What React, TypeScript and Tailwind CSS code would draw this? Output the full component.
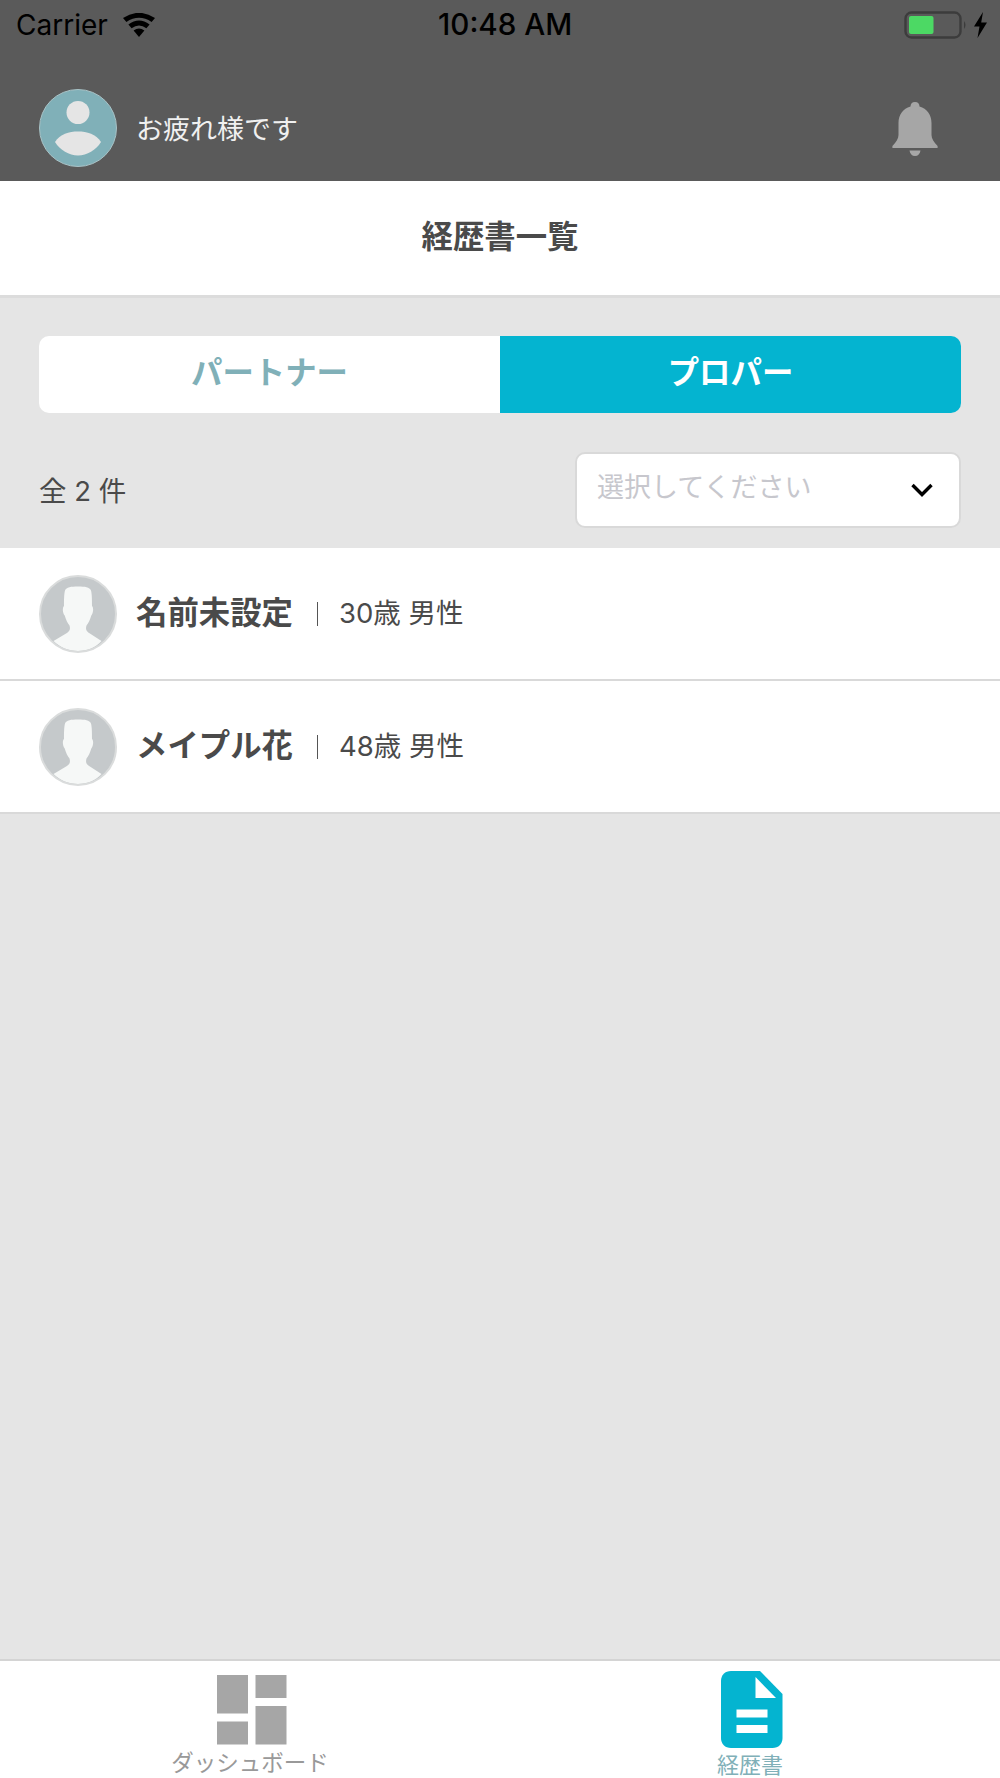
const jp = "font-['Noto_Sans_CJK_JP','Noto_Sans',sans-serif]";
const mixed = "font-['Inter','Noto_Sans_CJK_JP',sans-serif]";

function Wifi() {
  return (
    <svg width="34" height="24" viewBox="0 0 34 24" className="block">
      <path d="M17 24 L11.6 17.6 Q17 13.4 22.4 17.6 Z" fill="#000" />
      <path d="M9.6 15.2 L6.4 11.4 Q17 3.6 27.6 11.4 L24.4 15.2 Q17 9.8 9.6 15.2 Z" fill="#000" />
      <path d="M4.4 9 L1 5 Q17 -5.4 33 5 L29.6 9 Q17 0.6 4.4 9 Z" fill="#000" />
    </svg>
  );
}

function Battery() {
  return (
    <svg width="86" height="28" viewBox="0 0 86 28" className="block">
      <rect x="1.5" y="1.5" width="55" height="25" rx="6" fill="none" stroke="#3c3c3c" strokeWidth="2.4" />
      <rect x="5" y="5" width="24.5" height="18" rx="2" fill="#4cd964" />
      <path d="M60 10 Q63 14 60 18 Z" fill="#3c3c3c" />
      <path d="M79 1 L70 15.5 L75.5 15.5 L73.5 27 L83 11.5 L77.2 11.5 Z" fill="#000" />
    </svg>
  );
}

function Bell() {
  return (
    <svg width="46" height="54" viewBox="0 0 46 54" className="mt-[2px] block">
      <path
        d="M23 0 C26 0 27.5 2 27.5 4.6 C35 6.5 39.5 13 39.5 21 L39.5 33 C39.5 37 42 40 45.6 44 L45.6 46 L0.4 46 L0.4 44 C4 40 6.5 37 6.5 33 L6.5 21 C6.5 13 11 6.5 18.5 4.6 C18.5 2 20 0 23 0 Z"
        fill="#a6a6a6"
      />
      <path d="M17.5 48.5 L28.5 48.5 C28 52 26 54 23 54 C20 54 18 52 17.5 48.5 Z" fill="#a6a6a6" />
    </svg>
  );
}

function UserAvatar() {
  return (
    <svg width="78" height="78" viewBox="0 0 78 78" className="block">
      <circle cx="39" cy="39" r="38.5" fill="#80b0b8" stroke="#a9c3c7" strokeWidth="1" />
      <circle cx="39" cy="23.5" r="11.5" fill="#e5e5e5" />
      <path d="M16 53 C21 45 30 42.5 39 42.5 C48 42.5 57 45 62 53 C57 61 48 66.5 39 66.5 C30 66.5 21 61 16 53 Z" fill="#e5e5e5" />
    </svg>
  );
}

function PersonAvatar() {
  return (
    <svg width="78" height="78" viewBox="0 0 78 78" className="block">
      <circle cx="39" cy="39" r="38" fill="#c5c9cb" />
      <path
        d="M39 11.5 C46 11.5 50.5 12 52 15.5 C53 19 53 26 53 31 C54.8 32.5 54.4 38 52.3 40.5 C51 45 49.5 48 47.5 50.5 C46.5 54 47 56 50.5 58.2 L62.5 66 C57 72.5 48 76 39 76 C30 76 21 72.5 14.5 66 L27.5 58.2 C31 56 31.5 54 30.5 50.5 C28.5 48 27 45 25.7 40.5 C23.6 38 23.2 32.5 25 31 C25 26 25 19 26 15.5 C27.5 12 32 11.5 39 11.5 Z"
        fill="#f6f8f7"
      />
      <circle cx="39" cy="39" r="38" fill="none" stroke="#dadcdc" strokeWidth="2" />
    </svg>
  );
}

function Chevron() {
  return (
    <svg width="24" height="16" viewBox="0 0 24 16" className="block">
      <path d="M2.5 3 L12 12.5 L21.5 3" fill="none" stroke="#000" strokeWidth="3.4" />
    </svg>
  );
}

function DashIcon() {
  return (
    <svg width="70" height="70" viewBox="0 0 70 70" className="ml-[3px] block">
      <rect x="0" y="0" width="31" height="38.5" fill="#a6a6a6" />
      <rect x="38.5" y="0" width="31" height="23" fill="#a6a6a6" />
      <rect x="0" y="46.5" width="31" height="23" fill="#a6a6a6" />
      <rect x="38.5" y="31" width="31" height="38.5" fill="#a6a6a6" />
    </svg>
  );
}

function DocIcon() {
  return (
    <svg width="62" height="77" viewBox="0 0 62 77" className="ml-[3px] block">
      <path
        d="M10 0 L39 0 L61.5 23 L61.5 67 C61.5 73 57.5 77 51.5 77 L10 77 C4 77 0 73 0 67 L0 10 C0 4 4 0 10 0 Z"
        fill="#04b4d0"
      />
      <path d="M34.5 6 L55 27 L34.5 27 Z" fill="#fff" />
      <rect x="15.5" y="38.5" width="31" height="8" fill="#fff" />
      <rect x="15.5" y="54" width="31" height="8" fill="#fff" />
    </svg>
  );
}

function Row({ name, age }: { name: string; age: string }) {
  return (
    <div className="flex h-[133px] items-center border-b-2 border-[#d9d9d9] bg-white pl-[39px]">
      <PersonAvatar />
      <span className="ml-[19px] w-[159px] pb-[6px] text-[31.4px] leading-none font-bold whitespace-nowrap text-[#4a4a4a]">{name}</span>
      <span className="ml-[22px] h-[24px] w-px bg-[#555]" />
      <span className={`${mixed} ml-[21px] text-[27.5px] leading-none whitespace-nowrap text-[#4a4a4a]`}>{age}</span>
    </div>
  );
}

export default function App() {
  return (
    <div className={`${jp} flex h-[1778px] w-[1000px] flex-col overflow-hidden bg-[#e5e5e5]`}>
      <header className="relative h-[181px] shrink-0 bg-[#5a5a5a]">
        <div className="relative flex h-[50px] items-center justify-between pr-[10px] pl-[16px] text-black">
          <div className="flex items-center gap-[14px] font-['Inter',sans-serif] text-[28px] leading-none">
            <span>Carrier</span>
            <Wifi />
          </div>
          <span className="absolute left-[438px] font-['Inter',sans-serif] text-[29.6px] leading-none font-medium whitespace-nowrap">10:48 AM</span>
          <Battery />
        </div>
        <div className="mt-[39px] flex items-center justify-between pr-[62px] pl-[39px]">
          <div className="flex items-center gap-[19px]">
            <UserAvatar />
            <span className="pb-[2px] text-[27px] leading-none whitespace-nowrap text-[#f0f0f0]">お疲れ様です</span>
          </div>
          <Bell />
        </div>
      </header>

      <div className="flex h-[117px] shrink-0 items-center justify-center border-b-[3px] border-[#dcdcdc] bg-white pb-[7px]">
        <h1 className="text-[31.4px] leading-none font-bold text-[#4a4a4a]">経歴書一覧</h1>
      </div>

      <div className="flex h-[250px] shrink-0 flex-col px-[39px] pt-[38px]">
        <div className="flex h-[77px] w-[922px] overflow-hidden rounded-[10px] text-[31.4px] leading-none font-bold">
          <div className="flex w-[461px] items-center justify-center bg-white pb-[8px] text-[#80b0b8]">パートナー</div>
          <div className="flex w-[461px] items-center justify-center bg-[#04b4d0] pb-[8px] text-white">プロパー</div>
        </div>
        <div className="mt-[39px] flex items-center justify-between">
          <span className={`${mixed} pt-[4px] text-[27.5px] leading-none whitespace-nowrap text-[#4a4a4a]`}>全 2 件</span>
          <div className="flex h-[76px] w-[386px] items-center justify-between rounded-[10px] border-2 border-[#d9d9d9] bg-white pr-[25px] pl-[20px]">
            <span className="pb-[9px] text-[27px] leading-none whitespace-nowrap text-[#c7c7cd]">選択してください</span>
            <Chevron />
          </div>
        </div>
      </div>

      <Row name="名前未設定" age="30歳 男性" />
      <Row name="メイプル花" age="48歳 男性" />

      <div className="flex-1" />

      <nav className="flex h-[119px] shrink-0 border-t-2 border-[#d4d4d4] bg-white">
        <div className="flex w-[500px] flex-col items-center pt-[14px]">
          <DashIcon />
          <span className="mt-[5px] text-[22.5px] leading-none whitespace-nowrap text-[#999]">ダッシュボード</span>
        </div>
        <div className="flex w-[500px] flex-col items-center pt-[10px]">
          <DocIcon />
          <span className="mt-[4px] text-[22px] leading-none whitespace-nowrap text-[#80b0b8]">経歴書</span>
        </div>
      </nav>
    </div>
  );
}
